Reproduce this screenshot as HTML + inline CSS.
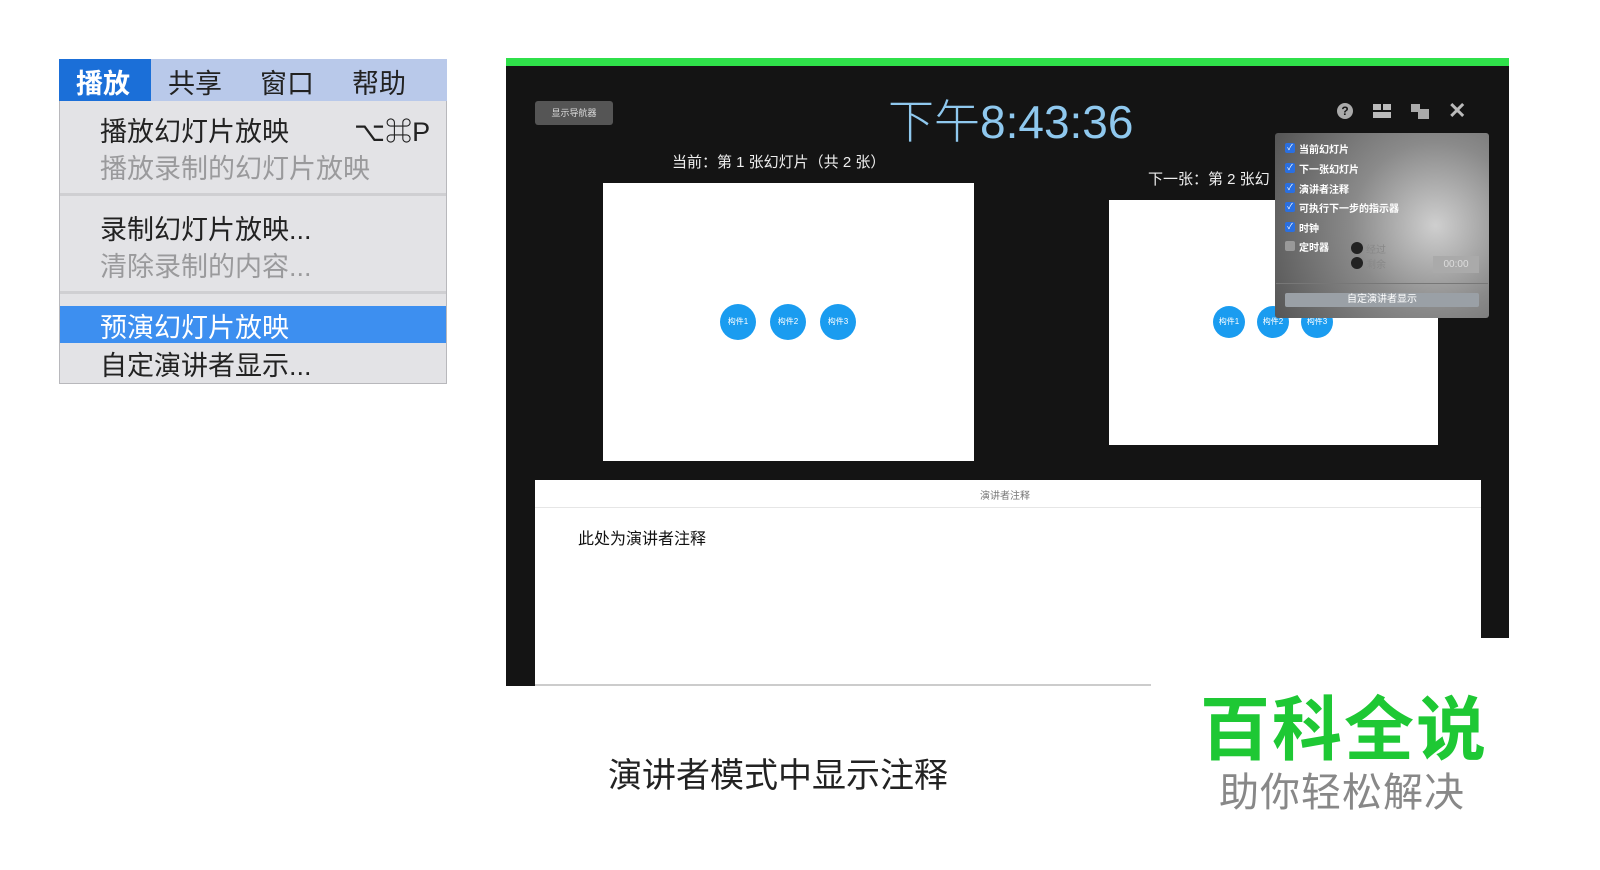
<!DOCTYPE html>
<html><head><meta charset="utf-8"><style>
*{margin:0;padding:0;box-sizing:border-box}
body{width:1600px;height:870px;background:#fff;position:relative;overflow:hidden;font-family:"Liberation Sans","Noto Sans CJK SC",sans-serif}
.a{position:absolute;white-space:nowrap}
.circ{position:absolute;width:36px;height:36px;border-radius:50%;background:#1a9cf0;color:#fff;font-size:8px;text-align:center;line-height:36px}
.chk{position:absolute;left:1285px;width:10px;height:10px;background:#2a6fe0;border-radius:2px;color:#fff;font-size:8px;line-height:10px;text-align:center}
.pl{position:absolute;left:1299px;font-size:10px;color:#fff;font-weight:bold}
</style></head><body>
<!-- menu -->
<div class="a" style="left:59px;top:59px;width:388px;height:325px;background:#e3e3e6;border:1px solid #b8b8bc"></div>
<div class="a" style="left:59px;top:59px;width:388px;height:42px;background:#b9c9ea"></div>
<div class="a" style="left:59px;top:59px;width:92px;height:42px;background:#1b6fd8"></div>
<div class="a" style="left:76px;top:62px;font-size:27px;color:#fff;font-weight:bold">播放</div>
<div class="a" style="left:168px;top:62px;font-size:27px;color:#222">共享</div>
<div class="a" style="left:260px;top:62px;font-size:27px;color:#222">窗口</div>
<div class="a" style="left:352px;top:62px;font-size:27px;color:#222">帮助</div>
<div class="a" style="left:100px;top:110px;font-size:27px;color:#222">播放幻灯片放映</div>
<div class="a" style="left:354px;top:110px;font-size:27px;color:#222">⌥⌘P</div>
<div class="a" style="left:100px;top:147px;font-size:27px;color:#9a9a9c">播放录制的幻灯片放映</div>
<div class="a" style="left:60px;top:193px;width:386px;height:3px;background:#cfcfd2"></div>
<div class="a" style="left:100px;top:208px;font-size:27px;color:#222">录制幻灯片放映...</div>
<div class="a" style="left:100px;top:245px;font-size:27px;color:#9a9a9c">清除录制的内容...</div>
<div class="a" style="left:60px;top:291px;width:386px;height:3px;background:#cfcfd2"></div>
<div class="a" style="left:60px;top:306px;width:386px;height:37px;background:#3d8ff0"></div>
<div class="a" style="left:100px;top:306px;font-size:27px;color:#fff">预演幻灯片放映</div>
<div class="a" style="left:100px;top:344px;font-size:27px;color:#222">自定演讲者显示...</div>
<!-- presenter -->
<div class="a" style="left:506px;top:58px;width:1003px;height:580px;background:#141414"></div>
<div class="a" style="left:506px;top:600px;width:30px;height:86px;background:#141414"></div>
<div class="a" style="left:506px;top:58px;width:1003px;height:8px;background:#2fe04a"></div>
<div class="a" style="left:535px;top:101px;width:78px;height:24px;background:#555;border-radius:3px;color:#ddd;font-size:9px;text-align:center;line-height:24px">显示导航器</div>
<div class="a" style="left:888px;top:86px;font-size:46px;color:#8fc8ee;font-weight:300">下午8:43:36</div>
<div class="a" style="left:672px;top:151px;font-size:15px;color:#eee">当前：第 1 张幻灯片（共 2 张）</div>
<div class="a" style="left:603px;top:183px;width:371px;height:278px;background:#fff"></div>
<div class="circ" style="left:720px;top:304px">构件1</div>
<div class="circ" style="left:770px;top:304px">构件2</div>
<div class="circ" style="left:820px;top:304px">构件3</div>
<div class="a" style="left:1148px;top:168px;font-size:15px;color:#eee">下一张：第 2 张幻</div>
<div class="a" style="left:1109px;top:200px;width:329px;height:245px;background:#fff"></div>
<div class="circ" style="left:1213px;top:306px;width:32px;height:32px;line-height:32px">构件1</div>
<div class="circ" style="left:1257px;top:306px;width:32px;height:32px;line-height:32px">构件2</div>
<div class="circ" style="left:1301px;top:306px;width:32px;height:32px;line-height:32px">构件3</div>
<!-- icons -->
<div class="a" style="left:1337px;top:103px;width:16px;height:16px;border-radius:50%;background:#aaa;color:#141414;font-size:12px;font-weight:bold;text-align:center;line-height:16px">?</div>
<div class="a" style="left:1373px;top:104px;width:8px;height:6px;background:#bbb"></div>
<div class="a" style="left:1383px;top:104px;width:8px;height:6px;background:#bbb"></div>
<div class="a" style="left:1373px;top:112px;width:18px;height:6px;background:#bbb"></div>
<div class="a" style="left:1411px;top:104px;width:9px;height:8px;background:#aaa"></div>
<div class="a" style="left:1418px;top:109px;width:11px;height:10px;background:#aaa"></div>
<div class="a" style="left:1448px;top:98px;font-size:22px;color:#bbb;font-weight:bold">✕</div>
<!-- popover -->
<div class="a" style="left:1275px;top:133px;width:214px;height:185px;background:radial-gradient(circle at 75% 50%,#cfcfcf 0%,#8a8a8a 45%,#555 100%);border-radius:3px"></div>
<div class="chk" style="top:143px">✓</div><div class="pl" style="top:141px">当前幻灯片</div>
<div class="chk" style="top:163px">✓</div><div class="pl" style="top:161px">下一张幻灯片</div>
<div class="chk" style="top:183px">✓</div><div class="pl" style="top:181px">演讲者注释</div>
<div class="chk" style="top:202px">✓</div><div class="pl" style="top:200px">可执行下一步的指示器</div>
<div class="chk" style="top:222px">✓</div><div class="pl" style="top:220px">时钟</div>
<div class="chk" style="top:241px;background:#999"></div><div class="pl" style="top:239px">定时器</div>
<div class="a" style="left:1351px;top:242px;width:12px;height:12px;border-radius:50%;background:#222"></div>
<div class="a" style="left:1366px;top:241px;font-size:10px;color:#888">经过</div>
<div class="a" style="left:1351px;top:257px;width:12px;height:12px;border-radius:50%;background:#222"></div>
<div class="a" style="left:1366px;top:256px;font-size:10px;color:#888">剩余</div>
<div class="a" style="left:1433px;top:256px;width:46px;height:17px;background:#aaa;color:#ddd;font-size:10px;text-align:center;line-height:17px">00:00</div>
<div class="a" style="left:1276px;top:283px;width:212px;height:1px;background:#777"></div>
<div class="a" style="left:1285px;top:293px;width:194px;height:14px;background:#9aa0a6;border-radius:2px;color:#fff;font-size:10px;text-align:center;line-height:14px">自定演讲者显示</div>
<!-- notes -->
<div class="a" style="left:535px;top:480px;width:946px;height:205px;background:#fff"></div>
<div class="a" style="left:535px;top:507px;width:946px;height:1px;background:#e6e6e6"></div>
<div class="a" style="left:980px;top:487px;font-size:10px;color:#777">演讲者注释</div>
<div class="a" style="left:578px;top:525px;font-size:16px;color:#111">此处为演讲者注释</div>
<div class="a" style="left:535px;top:684px;width:616px;height:2px;background:#ccc"></div>
<div class="a" style="left:608px;top:748px;font-size:34px;color:#222">演讲者模式中显示注释</div>
<div class="a" style="left:1200px;top:674px;font-size:70px;color:#1ec834;font-weight:bold;letter-spacing:2px">百科全说</div>
<div class="a" style="left:1219px;top:760px;font-size:40px;color:#888;letter-spacing:1px">助你轻松解决</div>
</body></html>
